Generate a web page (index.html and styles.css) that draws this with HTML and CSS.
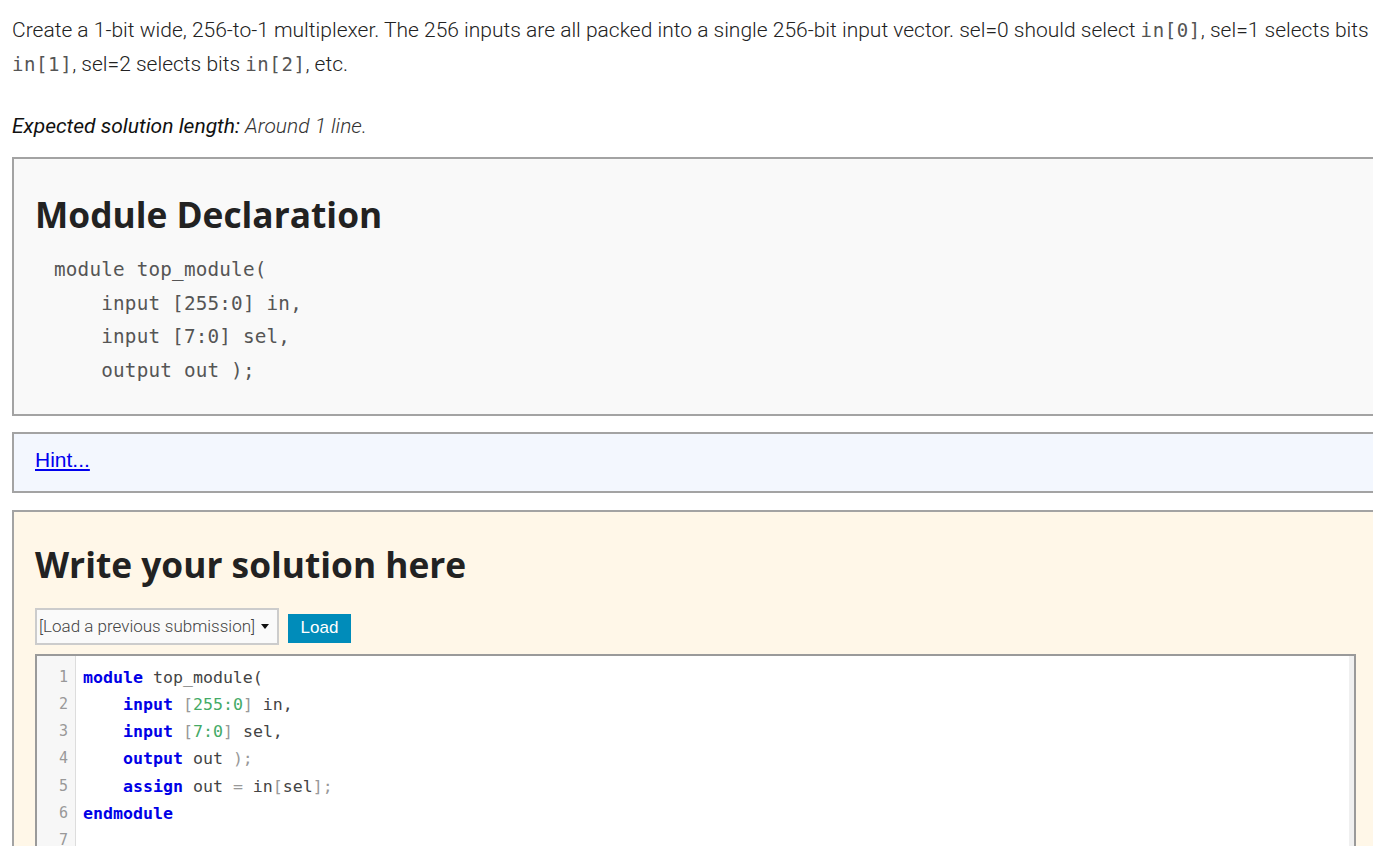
FILE: index.html
```html
<!DOCTYPE html>
<html>
<head>
<meta charset="utf-8">
<link rel="stylesheet" href="styles.css">
</head>
<body>
<div class="page">
  <p class="desc">Create a 1-bit wide, 256-to-1 multiplexer. The 256 inputs are all packed into a single 256-bit input vector. sel=0 should select <code>in[0]</code>, sel=1 selects bits <code>in[1]</code>, sel=2 selects bits <code>in[2]</code>, etc.</p>
  <p class="expected"><span class="exp-label">Expected solution length:</span> Around 1 line.</p>

  <div class="box box-decl">
    <h2 class="box-title">Module Declaration</h2>
<pre class="decl">module top_module(
    input [255:0] in,
    input [7:0] sel,
    output out );</pre>
  </div>

  <div class="box box-hint">
    <a href="#" class="hint-link">Hint...</a>
  </div>

  <div class="box box-solution">
    <h2 class="box-title sol-title">Write your solution here</h2>
    <div class="toolbar">
      <div class="select">[Load a previous submission]<span class="caret"></span></div>
      <button class="load-btn">Load</button>
    </div>
    <div class="editor">
      <div class="gutter">
        <div class="ln">1</div><div class="ln">2</div><div class="ln">3</div><div class="ln">4</div><div class="ln">5</div><div class="ln">6</div><div class="ln">7</div><div class="ln">8</div>
      </div>
      <div class="code">
        <div class="cl"><span class="kw">module</span> top_module(</div>
        <div class="cl">    <span class="kw">input</span> <span class="pn">[</span><span class="num">255:0</span><span class="pn">]</span> in,</div>
        <div class="cl">    <span class="kw">input</span> <span class="pn">[</span><span class="num">7:0</span><span class="pn">]</span> sel,</div>
        <div class="cl">    <span class="kw">output</span> out <span class="pn">);</span></div>
        <div class="cl">    <span class="kw">assign</span> out <span class="pn">=</span> in<span class="pn">[</span>sel<span class="pn">];</span></div>
        <div class="cl"><span class="kw">endmodule</span></div>
        <div class="cl"> </div>
        <div class="cl"> </div>
      </div>
      <div class="vscroll"></div>
    </div>
  </div>
</div>
</body>
</html>
```

FILE: styles.css
```css
html, body {
  margin: 0;
  padding: 0;
  overflow: hidden;
  background: #ffffff;
}

.page {
  width: 1367px;
  padding: 13px 0 0 12px;
  font-family: Roboto, "Noto Sans", sans-serif;
  font-weight: 300;
  font-size: 21px;
  color: #222;
}

.desc {
  margin: 0;
  line-height: 34px;
  width: 1365px;
}

.desc code {
  font-family: "DejaVu Sans Mono", monospace;
  font-size: 19px;
  letter-spacing: 0.6px;
  color: #555;
  font-weight: normal;
}

.expected {
  margin: 28px 0 0 0;
  line-height: 34px;
  font-style: italic;
  color: #333;
}

.exp-label {
  font-weight: 400;
  color: #111;
}

.box {
  border: 2px solid #a3a3a3;
  box-sizing: border-box;
  width: 1367px;
}

.box-decl {
  margin-top: 14px;
  background: #f9f9f9;
  padding: 34px 21px 26px 21px;
}

.box-title {
  margin: 0;
  font-family: "Open Sans", sans-serif;
  font-weight: 700;
  font-size: 35.3px;
  line-height: 42px;
  color: #222;
}

.decl {
  margin: 18px 0 0 19px;
  font-family: "DejaVu Sans Mono", monospace;
  font-size: 19.3px;
  letter-spacing: 0.2px;
  line-height: 33.7px;
  color: #555;
}

.box-hint {
  margin-top: 16px;
  background: #f3f7fe;
  height: 61px;
  padding: 0 21px 4px 21px;
  display: flex;
  align-items: center;
}

.hint-link {
  font-family: "Liberation Sans", Arial, sans-serif;
  font-weight: 400;
  font-size: 21px;
  color: #0000ee;
  text-decoration: underline;
}

.box-solution {
  margin-top: 17px;
  background: #fff7e8;
  padding: 31px 21px 40px 21px;
}

.sol-title {
  line-height: 42px;
}

.toolbar {
  margin-top: 23px;
  display: flex;
  align-items: flex-start;
  gap: 9px;
}

.select {
  width: 244px;
  height: 37px;
  box-sizing: border-box;
  border: 2px solid #cccccc;
  background: #fafafa;
  font-size: 17px;
  font-weight: 300;
  color: #444;
  display: flex;
  align-items: center;
  padding-left: 2px;
}

.caret {
  display: inline-block;
  width: 0;
  height: 0;
  margin-left: 6px;
  border-left: 4px solid transparent;
  border-right: 4px solid transparent;
  border-top: 5px solid #111;
}

.load-btn {
  width: 63px;
  height: 29px;
  border: none;
  margin: 6px 0 0 0;
  padding: 0;
  background: #008cba;
  color: #ffffff;
  font-family: "Liberation Sans", Arial, sans-serif;
  font-size: 17px;
}

.editor {
  margin-top: 9px;
  border: 2px solid #9a9a9a;
  background: #ffffff;
  display: flex;
  height: 260px;
  width: 1321px;
  box-sizing: border-box;
}

.gutter {
  width: 39px;
  background: #f7f7f7;
  border-right: 1px solid #dddddd;
  padding-top: 8px;
  box-sizing: border-box;
  text-align: right;
}

.ln {
  font-family: "DejaVu Sans Mono", monospace;
  font-size: 15px;
  line-height: 27.2px;
  color: #999;
  padding-right: 7px;
}

.code {
  flex: 1;
  padding: 8px 0 0 7px;
  font-family: "DejaVu Sans Mono", monospace;
  font-size: 16.6px;
  color: #444;
}

.cl {
  line-height: 27.2px;
  white-space: pre;
}

.kw {
  color: #0000e6;
  font-weight: bold;
}

.num {
  color: #44aa66;
}

.pn {
  color: #999;
}

.vscroll {
  width: 5px;
  background: #f0f0f0;
}
```
